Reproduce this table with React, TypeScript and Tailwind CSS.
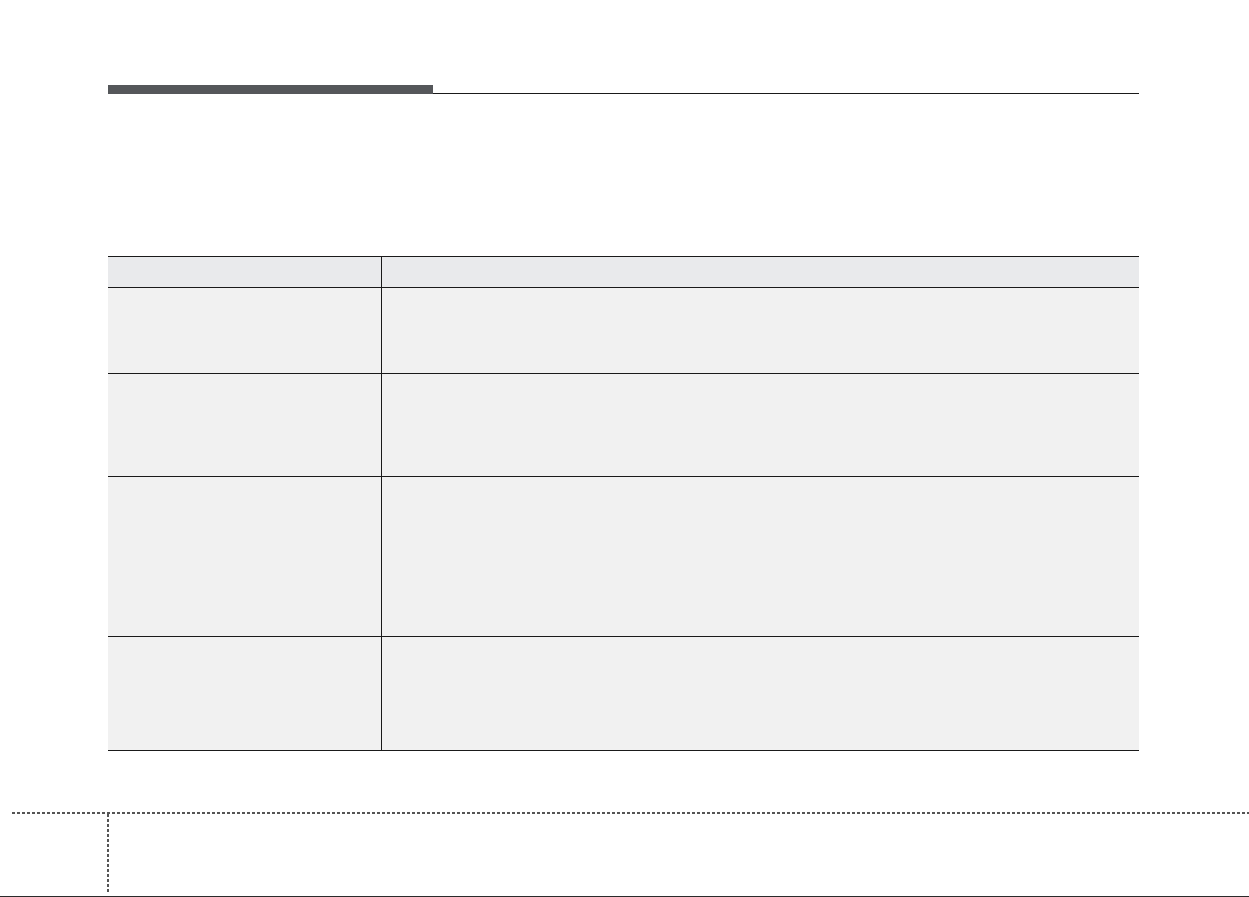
export default function App() {
	const rows = [
		{ h: "h-[85px]" },
		{ h: "h-[102px]" },
		{ h: "h-[159px]" },
		{ h: "h-[113px]" },
	];

	return (
		<div className="w-[1249px] h-[897px] bg-white flex flex-col font-['Liberation_Sans',sans-serif]">
			{/* section heading rule */}
			<div className="mt-[85px] ml-[108px] mr-[110px] flex items-end">
				<div className="w-[325px] h-[9px] bg-[#55575a]" />
				<div className="flex-1 h-px bg-[#1a1a1a]" />
			</div>

			{/* table */}
			<div className="mt-[162px] ml-[108px] mr-[110px] border-t border-[#1a1a1a]">
				<div className="grid grid-cols-[274px_1fr] h-[31px] bg-[#e9eaec] border-b border-[#1a1a1a]">
					<div className="border-r border-[#1a1a1a]" />
					<div />
				</div>
				{rows.map((r, i) => (
					<div
						key={i}
						className={`grid grid-cols-[274px_1fr] ${r.h} box-content bg-[#f1f1f1] border-b border-[#1a1a1a]`}>
						<div className="border-r border-[#1a1a1a]" />
						<div />
					</div>
				))}
			</div>

			{/* page footer guides */}
			<div className="mt-[61px] ml-[12px] h-[2px] bg-[repeating-linear-gradient(to_right,#555_0_3px,transparent_3px_5px)]" />
			<div className="ml-[107px] w-[2px] h-[80px] bg-[repeating-linear-gradient(to_bottom,#555_0_3px,transparent_3px_5px)]" />
			<div className="mt-auto h-px bg-[#2a2a2a]" />
		</div>
	);
}
